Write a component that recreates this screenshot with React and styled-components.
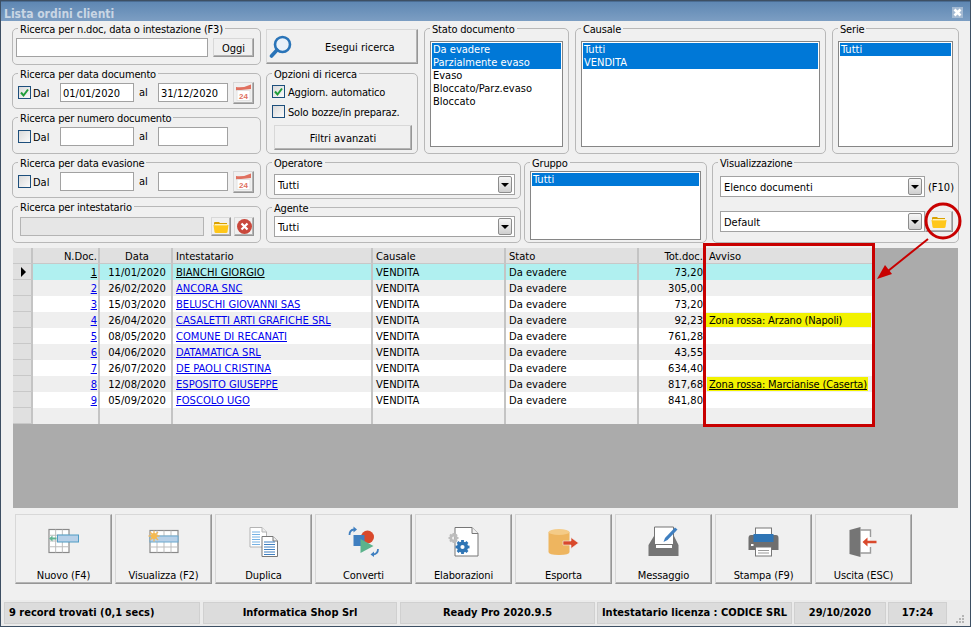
import React from "react";
import styled, { createGlobalStyle } from "styled-components";

const FONT = `"DejaVu Sans Condensed", "DejaVu Sans", Tahoma, sans-serif`;
const COLS = "20px 67px 73px 200px 133px 133px 67px 167px";

const Global = createGlobalStyle`
  html, body { margin: 0; padding: 0; background: #f0f0f0; overflow: hidden; }
  * { box-sizing: border-box; }
`;

const Root = styled.div`
  position: relative;
  width: 971px;
  height: 627px;
  font: 11px/13px ${FONT};
  color: #000;
`;
const Win = styled.div`
  width: 100%;
  height: 100%;
  display: flex;
  flex-direction: column;
  background: #f0f0f0;
  border: 1px solid #3d4f63;
`;
const TitleBar = styled.div`
  height: 20px;
  flex: none;
  display: flex;
  align-items: center;
  justify-content: space-between;
  padding: 2px 7px 0 3px;
  background: linear-gradient(#5d86b2, #7c9ec3);
  box-shadow: inset 0 1px 0 #4a6c92;
`;
const Title = styled.span`
  font: bold 12px/16px ${FONT};
  color: #c9d6e4;
  padding-top: 3px;
`;
const CloseBox = styled.span`
  width: 11px;
  height: 11px;
  display: flex;
  background: #a3b9d2;
`;
const Body = styled.div`
  flex: 1;
  padding: 7px 11px 0 11px;
  display: flex;
  flex-direction: column;
`;
const Filters = styled.div`
  display: flex;
  gap: 5px;
  height: 215px;
`;
const Stack = styled.div`
  display: flex;
  flex-direction: column;
  gap: ${(p) => p.$gap ?? 8}px;
  width: ${(p) => (p.$w ? `${p.$w}px` : "auto")};
  flex: ${(p) => (p.$w ? "none" : "1")};
`;
const Row = styled.div`
  display: flex;
  gap: ${(p) => p.$gap}px;
  height: ${(p) => p.$h}px;
`;
const Group = styled.div`
  position: relative;
  flex: none;
  width: ${(p) => (p.$w ? `${p.$w}px` : "auto")};
  height: ${(p) => p.$h}px;
  border: 1px solid #b8b8b8;
  border-radius: 5px;
  padding: ${(p) => p.$pad};
`;
const ViewGroup = styled(Group)`
  margin-left: 2px;
`;
const Caption = styled.span`
  position: absolute;
  top: -6px;
  left: 5px;
  padding: 0 2px;
  background: #f0f0f0;
  white-space: nowrap;
  line-height: 13px;
  font-size: 11px;
  letter-spacing: -0.18px;
`;
const InlineRow = styled.div`
  display: flex;
  align-items: center;
  justify-content: space-between;
  margin-top: ${(p) => p.$mt ?? 0}px;
`;
const DateGrid = styled.div`
  display: grid;
  grid-template-columns: 13px 29px 74px 24px 70px 26px;
  grid-template-rows: 19px;
  align-items: center;
`;
const TextField = styled.input`
  display: block;
  width: ${(p) => (p.$w ? `${p.$w}px` : "100%")};
  height: 19px;
  border: 1px solid ${(p) => (p.disabled ? "#b4b4b4" : "#a2a2a2")};
  background: ${(p) => (p.disabled ? "#e6e6e6" : "#fff")};
  padding: 1px 2px 0;
  margin: 0;
  outline: none;
  border-radius: 0;
  font: 11px ${FONT};
  color: #000;
`;
const RaisedButton = styled.button`
  display: flex;
  align-items: center;
  justify-content: center;
  width: ${(p) => (p.$w ? `${p.$w}px` : "100%")};
  height: ${(p) => p.$h}px;
  padding: 0;
  margin: 0;
  background: #f0f0f0;
  border: 1px solid;
  border-color: #d8d8d8 #969696 #969696 #d8d8d8;
  box-shadow: inset -1px -1px 0 #b4b4b4;
  border-radius: 0;
  font: 11px ${FONT};
  color: #000;
`;
const EndButton = styled(RaisedButton)`
  justify-self: end;
`;
const SearchButton = styled(RaisedButton)`
  margin-top: 1px;
  justify-content: flex-start;
  padding-left: 2px;
  gap: 32px;
  flex: none;
`;
const OptionButton = styled(RaisedButton)`
  margin-left: 2px;
`;
const CancelButton = styled(RaisedButton)`
  margin-left: 3px;
`;
const ButtonText = styled.span`
  padding-top: 2px;
`;
const Check = styled.span`
  display: flex;
  width: 13px;
  height: 13px;
  flex: none;
  border: 1px solid #1d4f7c;
  background: linear-gradient(135deg, #dadada, #fafafa);
`;
const SideLabel = styled.span`
  padding-left: ${(p) => p.$pl ?? 0}px;
  padding-top: ${(p) => p.$pt ?? 0}px;
  font-size: 11px;
`;
const CheckRow = styled.label`
  display: flex;
  align-items: center;
  gap: 3px;
  height: 13px;
  margin-bottom: 7px;
  font-size: 11px;
  white-space: nowrap;
`;
const CheckText = styled.span`
  padding-top: 1px;
  letter-spacing: -0.18px;
`;
const Select = styled.div`
  display: flex;
  align-items: center;
  justify-content: space-between;
  width: ${(p) => (p.$w ? `${p.$w}px` : "100%")};
  height: 21px;
  padding: 0 2px 0 3px;
  background: #fff;
  border: 1px solid #a2a2a2;
  font-size: 11px;
`;
const SelectText = styled.span`
  padding-top: 2px;
`;
const Arrow = styled.span`
  width: 14px;
  height: 17px;
  display: flex;
  align-items: center;
  justify-content: center;
  border: 1px solid #8c8c8c;
  border-radius: 2px;
  background: linear-gradient(#f6f6f6, #cfcfcf);
  &::after {
    content: "";
    border-top: 4px solid #000;
    border-left: 4px solid transparent;
    border-right: 4px solid transparent;
  }
`;
const ListBox = styled.div`
  height: 100%;
  background: #fff;
  border: 1px solid #868686;
  padding: 1px;
`;
const ListItem = styled.div`
  height: 13px;
  line-height: 13px;
  padding-left: 1px;
  font-size: 11px;
  background: ${(p) => (p.$on ? "#0078d7" : "transparent")};
  color: ${(p) => (p.$on ? "#fff" : "#000")};
`;
const Grid = styled.div`
  margin: 5px 0 0 1px;
  width: 945px;
  height: 260px;
  flex: none;
  background: #ababab;
`;
const GridRow = styled.div`
  display: grid;
  grid-template-columns: ${COLS};
  width: 860px;
  height: 16px;
  background: ${(p) => p.$bg};
`;
const Cell = styled.div`
  height: 16px;
  line-height: 18px;
  padding: ${(p) => (p.$right ? `0 ${p.$noline ? 3 : 1}px 0 0` : p.$flush ? "0" : "0 0 0 3px")};
  text-align: ${(p) => (p.$right ? "right" : p.$center ? "center" : "left")};
  white-space: nowrap;
  overflow: hidden;
  border-right: ${(p) => (p.$noline ? "0" : "2px solid #c4c4c4")};
  color: ${(p) => (p.$link ? "#0000ee" : "#000")};
  text-decoration: ${(p) => (p.$link || p.$under ? "underline" : "none")};
  font-size: 11.1px;
`;
const HeadCell = styled(Cell)`
  background: #e0e0e0;
  border-bottom: 1px solid #c8c8c8;
`;
const Marker = styled.div`
  height: 16px;
  display: flex;
  align-items: center;
  padding-left: 8px;
  background: #e0e0e0;
  border-right: 2px solid #c4c4c4;
  border-bottom: 1px solid #c8c8c8;
  &::after {
    content: "";
    display: ${(p) => (p.$on ? "block" : "none")};
    border-left: 5px solid #000;
    border-top: 5px solid transparent;
    border-bottom: 5px solid transparent;
  }
`;
const Highlight = styled.span`
  display: ${(p) => (p.$full ? "block" : "inline-block")};
  height: 14px;
  line-height: 15px;
  margin: 1px ${(p) => (p.$full ? "2px" : "0")} 1px ${(p) => (p.$full ? "0" : "1px")};
  padding: 0 ${(p) => (p.$full ? "0" : "1px")} 0 ${(p) => (p.$full ? "3px" : "2px")};
  background: #f2f200;
  font-size: 11px;
  letter-spacing: -0.16px;
  text-decoration: ${(p) => (p.$under ? "underline" : "none")};
`;
const Toolbar = styled.div`
  display: flex;
  gap: 3px;
  margin: 6px 0 0 3px;
`;
const ToolButton = styled(RaisedButton)`
  flex-direction: column;
  justify-content: flex-start;
  width: 97px;
  height: 70px;
  padding-top: 10px;
  gap: 12px;
`;
const ToolLabel = styled.span`
  font-size: 11px;
  line-height: 14px;
  letter-spacing: -0.12px;
`;
const StatusBar = styled.div`
  flex: none;
  height: 26px;
  display: flex;
  gap: 2px;
  padding: 2px 0 0 3px;
  background: #ebebeb;
  position: relative;
`;
const StatusCell = styled.div`
  width: ${(p) => p.$w}px;
  height: 22px;
  margin-left: ${(p) => p.$ml ?? 0}px;
  padding: ${(p) => (p.$left ? "0 0 0 4px" : "0")};
  text-align: ${(p) => (p.$left ? "left" : "center")};
  background: #dcdcdc;
  border: 1px solid #d0d0d0;
  font: bold 11px/20px ${FONT};
  white-space: nowrap;
`;
const Grip = styled.svg`
  position: absolute;
  right: 6px;
  bottom: 3px;
`;
const Annotations = styled.svg`
  position: absolute;
  left: 0;
  top: 0;
  pointer-events: none;
`;
const Spacer = styled.span`
  flex: 1;
`;
const FieldNote = styled.span`
  font-size: 11px;
  margin-right: -1px;
  padding-top: 1px;
`;

const CheckMark = () => (
  <svg width="11" height="11" viewBox="0 0 11 11">
    <path d="M2 5.5 L4.5 8.5 L9 2.5" fill="none" stroke="#1f9d3a" strokeWidth="2" />
  </svg>
);
const CloseIcon = () => (
  <svg width="11" height="11" viewBox="0 0 11 11">
    <path d="M2.5 2.5 L8.5 8.5 M8.5 2.5 L2.5 8.5" stroke="#fff" strokeWidth="2.6" />
  </svg>
);
const Lens = () => (
  <svg width="24" height="24" viewBox="0 0 24 24">
    <circle cx="13.5" cy="9.5" r="7.5" fill="#e9f1f9" stroke="#2a74b8" strokeWidth="2.6" />
    <path d="M8 15 L2.5 21" stroke="#2a74b8" strokeWidth="3.6" strokeLinecap="round" />
  </svg>
);
const Calendar = () => (
  <svg width="17" height="17" viewBox="0 0 17 17">
    <path d="M1 3 Q9 4 16 0.5 L16 5 L1 6.5 Z" fill="#e0705f" />
    <rect x="2" y="6.5" width="13" height="10" fill="#fff" stroke="#e3e3e3" />
    <text x="8.5" y="14.5" fontFamily="Liberation Sans, sans-serif" fontSize="8" fontWeight="700" fill="#e0705f" textAnchor="middle">24</text>
  </svg>
);
const Folder = () => (
  <svg width="16" height="14" viewBox="0 0 16 14">
    <path d="M1 3 Q1 2 2 2 L6 2 L7 3 L14 3 L14 5 L1 5 Z" fill="#d9a000" />
    <path d="M0.5 5 L15.5 5 L14.5 12 Q14.4 13 13 13 L3 13 Q1.6 13 1.5 12 Z" fill="#ffc71a" />
    <rect x="1.5" y="4" width="13" height="1.4" fill="#fff2b8" />
  </svg>
);
const Cancel = () => (
  <svg width="17" height="17" viewBox="0 0 17 17">
    <circle cx="8.5" cy="8.5" r="7.5" fill="#c9483c" />
    <path d="M5.5 5.5 L11.5 11.5 M11.5 5.5 L5.5 11.5" stroke="#fff" strokeWidth="2.2" />
  </svg>
);

const Icon = ({ children }) => (
  <svg width="32" height="32" viewBox="0 0 32 32">{children}</svg>
);
const TableLines = ({ x, y, w, h, cols, rows }) => (
  <g fill="none" stroke="#8a8a8a">
    <rect x={x} y={y} width={w} height={h} fill="#fff" strokeWidth="1.2" />
    {Array.from({ length: cols - 1 }, (_, i) => (
      <path key={i} d={`M${x + ((i + 1) * w) / cols} ${y} V${y + h}`} stroke="#bdbdbd" />
    ))}
    {Array.from({ length: rows - 1 }, (_, i) => (
      <path key={i} d={`M${x} ${y + ((i + 1) * h) / rows} H${x + w}`} stroke="#bdbdbd" />
    ))}
  </g>
);
const Gear = ({ cx, cy, r, fill }) => (
  <g>
    <circle cx={cx} cy={cy} r={r * 0.55} fill="none" stroke={fill} strokeWidth={r * 0.5} />
    {[0, 45, 90, 135].map((a) => (
      <rect key={a} x={cx - r * 0.2} y={cy - r} width={r * 0.4} height={r * 0.4} fill={fill} transform={`rotate(${a} ${cx} ${cy})`} />
    ))}
    {[0, 45, 90, 135].map((a) => (
      <rect key={a} x={cx - r * 0.2} y={cy + r * 0.6} width={r * 0.4} height={r * 0.4} fill={fill} transform={`rotate(${a} ${cx} ${cy})`} />
    ))}
  </g>
);
const DocLines = ({ x, y, w, n, stroke }) => (
  <g stroke={stroke}>
    {Array.from({ length: n }, (_, i) => (
      <path key={i} d={`M${x} ${y + i * 2.5} h${w}`} />
    ))}
  </g>
);

const NewIcon = () => (
  <Icon>
    <TableLines x={1} y={4.5} w={20} h={23} cols={3} rows={4} />
    <rect x="9.5" y="10" width="21" height="7" fill="#b7d0e8" stroke="#4f9cc4" />
    <path d="M8.5 12.5 H4.5 V10.5 L1 13.5 L4.5 16.5 V14.5 H8.5 Z" fill="#62b393" />
  </Icon>
);
const ViewIcon = () => (
  <Icon>
    <TableLines x={2} y={5.5} w={28} h={22} cols={4} rows={4} />
    <rect x="2" y="11" width="28" height="6" fill="#b7d0e8" stroke="#6aa9cf" />
    <g stroke="#f0b860" strokeWidth="1.3">
      <path d="M6 5.5 V16.5 M0.5 11 H11.5 M2 7 L10 15 M10 7 L2 15" />
    </g>
    <circle cx="6" cy="11" r="3" fill="#f5b94f" />
  </Icon>
);
const CopyIcon = () => (
  <Icon>
    <path d="M2 2.5 H14 L18.5 7 V22 H2 Z" fill="#fff" stroke="#b4b4b4" />
    <DocLines x={4} y={7} w={8} n={6} stroke="#76b2e4" />
    <path d="M14 2.5 V7 H18.5" fill="#eee" stroke="#b4b4b4" />
    <path d="M14 11.5 H25 L29.5 16 V31.5 H14 Z" fill="#fff" stroke="#777" />
    <path d="M25 11.5 V16 H29.5" fill="#eee" stroke="#777" />
    <DocLines x={16} y={17} w={11} n={6} stroke="#3f7fc0" />
  </Icon>
);
const ConvertIcon = () => (
  <Icon>
    <path d="M1.5 10 Q1.5 5 6 4.5" fill="none" stroke="#3f7fc0" strokeWidth="1.8" />
    <path d="M5.5 1.5 L9 4.5 L5.5 7.5 Z" fill="#3f7fc0" />
    <circle cx="19.5" cy="12" r="6.5" fill="#d9492c" />
    <rect x="5.5" y="10" width="11" height="11" fill="#3f7fc0" />
    <path d="M12.5 14 V28 L25.5 21 Z" fill="#5cb38c" />
    <path d="M30 24 Q30 29 25 29.5" fill="none" stroke="#3f7fc0" strokeWidth="1.8" />
    <path d="M26 26.5 L22.5 29.5 L26 32 Z" fill="#3f7fc0" />
  </Icon>
);
const ToolsIcon = () => (
  <Icon>
    <path d="M7 2.5 H24 L30 8.5 V31 H7 Z" fill="#fff" stroke="#777" />
    <path d="M24 2.5 V8.5 H30" fill="#f0f0f0" stroke="#777" />
    <Gear cx={5.5} cy={13} r={5} fill="#bdbdbd" />
    <Gear cx={14.5} cy={22} r={7} fill="#2f75b5" />
  </Icon>
);
const ExportIcon = () => (
  <Icon>
    <path d="M0.5 7 V27 Q0.5 30 11 30 Q21.5 30 21.5 27 V7 Z" fill="#eeb55f" />
    <ellipse cx="11" cy="7" rx="10.5" ry="3" fill="#f4cb87" />
    <path d="M15 16 H23 V12.5 L30.5 18 L23 23.5 V20 H15 Z" fill="#d9492c" stroke="#f0f0f0" strokeWidth="0.6" />
  </Icon>
);
const MailIcon = () => (
  <Icon>
    <path d="M6.5 2 H25.5 V22 H6.5 Z" fill="#fff" stroke="#757575" />
    <path d="M6 11 L0.5 20 V31 H30.5 V20 L26 11 V19 H6 Z" fill="#757575" />
    <path d="M8 20 H24 V23 H8 Z" fill="#fff" />
    <path d="M15.5 17 L17 13 L27 2.5 L29.5 4.5 L19.5 15 Z" fill="#3f7fc0" />
  </Icon>
);
const PrintIcon = () => (
  <Icon>
    <rect x="7.5" y="3" width="16" height="8" fill="#fff" stroke="#777" />
    <path d="M3 10 H28 Q30.5 10 30.5 13 V25 H0.5 V13 Q0.5 10 3 10 Z" fill="#6f6f6f" />
    <rect x="5.5" y="9" width="20" height="8" fill="#2f75b5" />
    <rect x="3" y="19" width="2.5" height="2" fill="#fff" />
    <rect x="7.5" y="22" width="16" height="9" fill="#fff" stroke="#777" />
    <path d="M10 25.5 H21 M10 28 H21" stroke="#999" />
  </Icon>
);
const ExitIcon = () => (
  <Icon>
    <rect x="12.5" y="5" width="9.5" height="23" fill="#fff" />
    <path d="M12.5 5 H22.5 V12 M22.5 22 V28 H12.5" fill="none" stroke="#9a9a9a" strokeWidth="1.4" />
    <path d="M1.5 5 L12.5 2 V32 L1.5 29 Z" fill="#757575" />
    <path d="M28.5 15.8 H19.5 V12.5 L14.5 17 L19.5 21.5 V18.2 H28.5 Z" fill="#d9492c" />
  </Icon>
);

const DateFilter = ({ checked, from, to, calendar }) => (
  <DateGrid>
    <Check>{checked && <CheckMark />}</Check>
    <SideLabel $pl={2} $pt={2}>Dal</SideLabel>
    <TextField readOnly value={from} />
    <SideLabel $pl={5}>al</SideLabel>
    <TextField readOnly value={to} />
    {calendar && (
      <EndButton $w={21} $h={22}>
        <Calendar />
      </EndButton>
    )}
  </DateGrid>
);

const rows = [
  ["1", "11/01/2020", "BIANCHI GIORGIO", "73,20"],
  ["2", "26/02/2020", "ANCORA SNC", "305,00"],
  ["3", "15/03/2020", "BELUSCHI GIOVANNI SAS", "73,20"],
  ["4", "26/04/2020", "CASALETTI ARTI GRAFICHE SRL", "92,23", "Zona rossa: Arzano (Napoli)"],
  ["5", "08/05/2020", "COMUNE DI RECANATI", "761,28"],
  ["6", "04/06/2020", "DATAMATICA SRL", "43,55"],
  ["7", "26/07/2020", "DE PAOLI CRISTINA", "634,40"],
  ["8", "12/08/2020", "ESPOSITO GIUSEPPE", "817,68", "Zona rossa: Marcianise (Caserta)"],
  ["9", "05/09/2020", "FOSCOLO UGO", "841,80"],
];

const tools = [
  ["Nuovo (F4)", NewIcon],
  ["Visualizza (F2)", ViewIcon],
  ["Duplica", CopyIcon],
  ["Converti", ConvertIcon],
  ["Elaborazioni", ToolsIcon],
  ["Esporta", ExportIcon],
  ["Messaggio", MailIcon],
  ["Stampa (F9)", PrintIcon],
  ["Uscita (ESC)", ExitIcon],
];

const status = [
  { w: 196, text: "9 record trovati (0,1 secs)", left: true },
  { w: 194, text: "Informatica Shop Srl", ml: 1 },
  { w: 195, text: "Ready Pro 2020.9.5", ml: 1 },
  { w: 195, text: "Intestatario licenza : CODICE SRL" },
  { w: 92, text: "29/10/2020" },
  { w: 59, text: "17:24" },
];

const rowColor = (i) => (i === 0 ? "#b0f0f0" : i % 2 === 1 ? "#efefef" : "#fff");

export default function App() {
  return (
    <Root>
      <Global />
      <Win>
        <TitleBar>
          <Title>Lista ordini clienti</Title>
          <CloseBox>
            <CloseIcon />
          </CloseBox>
        </TitleBar>
        <Body>
          <Filters>
            <Stack $w={249}>
              <Group $h={37} $pad="9px 6px 0 3px">
                <Caption>Ricerca per n.doc, data o intestazione (F3)</Caption>
                <InlineRow>
                  <TextField readOnly value="" $w={192} />
                  <RaisedButton $w={41} $h={19}>
                    <ButtonText>Oggi</ButtonText>
                  </RaisedButton>
                </InlineRow>
              </Group>
              <Group $h={36} $pad="9px 0 0 5px">
                <Caption>Ricerca per data documento</Caption>
                <DateFilter checked from="01/01/2020" to="31/12/2020" calendar />
              </Group>
              <Group $h={37} $pad="9px 0 0 5px">
                <Caption>Ricerca per numero documento</Caption>
                <DateFilter from="" to="" />
              </Group>
              <Group $h={36} $pad="9px 0 0 5px">
                <Caption>Ricerca per data evasione</Caption>
                <DateFilter from="" to="" calendar />
              </Group>
              <Group $h={37} $pad="10px 6px 0 7px">
                <Caption>Ricerca per intestatario</Caption>
                <InlineRow>
                  <TextField disabled value="" readOnly $w={184} />
                  <Spacer />
                  <RaisedButton $w={20} $h={19}>
                    <Folder />
                  </RaisedButton>
                  <CancelButton $w={20} $h={19}>
                    <Cancel />
                  </CancelButton>
                </InlineRow>
              </Group>
            </Stack>
            <Stack>
              <Row $gap={6} $h={126}>
                <Stack $w={152} $gap={9}>
                  <SearchButton $h={35}>
                    <Lens />
                    <ButtonText>Esegui ricerca</ButtonText>
                  </SearchButton>
                  <Group $h={81} $pad="11px 7px 0 5px">
                    <Caption>Opzioni di ricerca</Caption>
                    <CheckRow>
                      <Check>
                        <CheckMark />
                      </Check>
                      <CheckText>Aggiorn. automatico</CheckText>
                    </CheckRow>
                    <CheckRow>
                      <Check />
                      <CheckText>Solo bozze/in preparaz.</CheckText>
                    </CheckRow>
                    <OptionButton $h={25}>
                      <ButtonText>Filtri avanzati</ButtonText>
                    </OptionButton>
                  </Group>
                </Stack>
                <Group $w={145} $h={126} $pad="12px 5px 6px 5px">
                  <Caption>Stato documento</Caption>
                  <ListBox>
                    <ListItem $on>Da evadere</ListItem>
                    <ListItem $on>Parzialmente evaso</ListItem>
                    <ListItem>Evaso</ListItem>
                    <ListItem>Bloccato/Parz.evaso</ListItem>
                    <ListItem>Bloccato</ListItem>
                  </ListBox>
                </Group>
                <Group $w={251} $h={126} $pad="12px 5px 6px 5px">
                  <Caption>Causale</Caption>
                  <ListBox>
                    <ListItem $on>Tutti</ListItem>
                    <ListItem $on>VENDITA</ListItem>
                  </ListBox>
                </Group>
                <Group $w={127} $h={126} $pad="12px 5px 6px 5px">
                  <Caption>Serie</Caption>
                  <ListBox>
                    <ListItem $on>Tutti</ListItem>
                  </ListBox>
                </Group>
              </Row>
              <Row $gap={3} $h={81}>
                <Stack $w={255} $gap={8}>
                  <Group $h={37} $pad="11px 5px 0 7px">
                    <Caption>Operatore</Caption>
                    <Select>
                      <SelectText>Tutti</SelectText>
                      <Arrow />
                    </Select>
                  </Group>
                  <Group $h={36} $pad="8px 5px 0 7px">
                    <Caption>Agente</Caption>
                    <Select>
                      <SelectText>Tutti</SelectText>
                      <Arrow />
                    </Select>
                  </Group>
                </Stack>
                <Group $w={183} $h={81} $pad="8px 5px 2px 5px">
                  <Caption>Gruppo</Caption>
                  <ListBox>
                    <ListItem $on>Tutti</ListItem>
                  </ListBox>
                </Group>
                <ViewGroup $w={247} $h={81} $pad="13px 5px 0 7px">
                  <Caption>Visualizzazione</Caption>
                  <InlineRow>
                    <Select $w={205}>
                      <SelectText>Elenco documenti</SelectText>
                      <Arrow />
                    </Select>
                    <FieldNote>(F10)</FieldNote>
                  </InlineRow>
                  <InlineRow $mt={14}>
                    <Select $w={205}>
                      <SelectText>Default</SelectText>
                      <Arrow />
                    </Select>
                    <RaisedButton $w={28} $h={21}>
                      <Folder />
                    </RaisedButton>
                    <Spacer />
                  </InlineRow>
                </ViewGroup>
              </Row>
            </Stack>
          </Filters>
          <Grid>
            <GridRow $bg="#e0e0e0">
              <Marker />
              <HeadCell $right>N.Doc.</HeadCell>
              <HeadCell $center>Data</HeadCell>
              <HeadCell>Intestatario</HeadCell>
              <HeadCell>Causale</HeadCell>
              <HeadCell>Stato</HeadCell>
              <HeadCell $right $noline>Tot.doc.</HeadCell>
              <HeadCell $noline>Avviso</HeadCell>
            </GridRow>
            {rows.map(([num, date, name, total, note], i) => (
              <GridRow key={num} $bg={rowColor(i)}>
                <Marker $on={i === 0} />
                <Cell $right $link={i > 0} $under={i === 0}>{num}</Cell>
                <Cell $center>{date}</Cell>
                <Cell $link={i > 0} $under={i === 0}>{name}</Cell>
                <Cell>VENDITA</Cell>
                <Cell>Da evadere</Cell>
                <Cell $right $noline>{total}</Cell>
                <Cell $noline $flush>
                  {note && (
                    <Highlight $full={i === 3} $under={i === 7}>{note}</Highlight>
                  )}
                </Cell>
              </GridRow>
            ))}
            <GridRow $bg="#efefef">
              <Marker />
              <Cell />
              <Cell />
              <Cell />
              <Cell />
              <Cell />
              <Cell $noline />
              <Cell $noline />
            </GridRow>
          </Grid>
          <Toolbar>
            {tools.map(([label, ToolIcon]) => (
              <ToolButton key={label}>
                <ToolIcon />
                <ToolLabel>{label}</ToolLabel>
              </ToolButton>
            ))}
          </Toolbar>
        </Body>
        <StatusBar>
          {status.map((s) => (
            <StatusCell key={s.text} $w={s.w} $left={s.left} $ml={s.ml}>{s.text}</StatusCell>
          ))}
          <Grip width="8" height="8" viewBox="0 0 8 8">
            <path d="M6 0h2v2H6z M6 3h2v2H6z M3 3h2v2H3z M6 6h2v2H6z M3 6h2v2H3z M0 6h2v2H0z" fill="#b5b5b5" />
          </Grip>
        </StatusBar>
      </Win>
      <Annotations width="971" height="627" viewBox="0 0 971 627">
        <rect x="704.5" y="244.5" width="169" height="181" fill="none" stroke="#c80000" strokeWidth="3" />
        <circle cx="943" cy="221" r="17" fill="none" stroke="#c80000" strokeWidth="3" />
        <path d="M928 239 L888 271" stroke="#c80000" strokeWidth="2" />
        <polygon points="877,279 885,265 892,274" fill="#c80000" />
      </Annotations>
    </Root>
  );
}
